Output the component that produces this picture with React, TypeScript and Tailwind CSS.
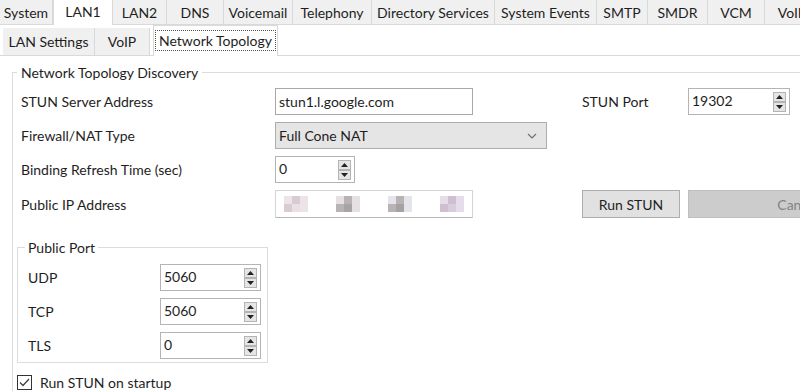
import React from 'react';

const topTabs: { label: string; w: string }[] = [
  { label: 'System', w: 'w-[53px]' },
  { label: 'LAN1', w: 'w-[60px]' },
  { label: 'LAN2', w: 'w-[54px]' },
  { label: 'DNS', w: 'w-[57px]' },
  { label: 'Voicemail', w: 'w-[69px]' },
  { label: 'Telephony', w: 'w-[79px]' },
  { label: 'Directory Services', w: 'w-[123px]' },
  { label: 'System Events', w: 'w-[102px]' },
  { label: 'SMTP', w: 'w-[51px]' },
  { label: 'SMDR', w: 'w-[60px]' },
  { label: 'VCM', w: 'w-[57px]' },
  { label: 'VoIP', w: 'w-[55px]' },
];

function Arrow({ up }: { up?: boolean }) {
  return (
    <div className="w-[13px] h-[10px] bg-[#e5e5e5] border border-[#b4b4b4] flex items-center justify-center">
      <svg width="7" height="4" viewBox="0 0 7 4">
        {up ? <path d="M0 4 L3.5 0 L7 4 Z" fill="#222" /> : <path d="M0 0 L3.5 4 L7 0 Z" fill="#222" />}
      </svg>
    </div>
  );
}

function SpinBox({ value, w }: { value: string; w: string }) {
  return (
    <div className={`h-[27px] ${w} border border-[#b4b4b4] bg-white flex items-center justify-between pl-[3px] pr-[3px]`}>
      <span className="-mt-[2px]">{value}</span>
      <div className="flex flex-col">
        <Arrow up />
        <Arrow />
      </div>
    </div>
  );
}

function Blob({ c1, c2, c3 }: { c1: string; c2: string; c3: string }) {
  return (
    <div className="flex h-[16px]">
      <div className="flex flex-col w-[8px]">
        <div className={`h-[8px] ${c1}`} />
        <div className={`h-[8px] ${c2}`} />
      </div>
      <div className="flex flex-col w-[8px]">
        <div className={`h-[8px] ${c2}`} />
        <div className={`h-[8px] ${c3}`} />
      </div>
      <div className="flex flex-col w-[8px]">
        <div className={`h-[8px] ${c1}`} />
        <div className={`h-[8px] ${c1}`} />
      </div>
    </div>
  );
}

export default function App() {
  return (
    <div className="w-[800px] h-[391px] overflow-hidden bg-white text-[14px] leading-[17px] text-[#1e1e1e] font-['Lato',sans-serif]">
      {/* top tabs */}
      <div className="flex h-[25px]">
        {topTabs.map(t =>
          t.label === 'LAN1' ? (
            <div key={t.label} className={`${t.w} shrink-0 h-[25px] bg-white border-x border-[#d9d9d9] flex items-start justify-center pt-[3px]`}>
              {t.label}
            </div>
          ) : (
            <div key={t.label} className={`${t.w} shrink-0 h-[25px] bg-[#f0f0f0] border-r border-b border-[#d9d9d9] flex items-center justify-center pt-[1px]`}>
              {t.label}
            </div>
          )
        )}
      </div>

      {/* sub tabs */}
      <div className="flex items-end h-[31px] border-b border-[#d9d9d9] pl-[3px]">
        <div className="w-[92px] h-[27px] bg-[#f0f0f0] border-r border-[#d9d9d9] flex items-center justify-center">LAN Settings</div>
        <div className="w-[55px] h-[27px] bg-[#f0f0f0] border-r border-[#d9d9d9] flex items-center justify-center">VoIP</div>
        <div className="ml-[3px] w-[125px] h-[31px] -mb-px bg-white border-x border-t border-[#d9d9d9] flex items-center justify-center">
          <span className="border border-dotted border-[#555] px-[3px] py-[1px] -mt-[2px]">Network Topology</span>
        </div>
      </div>

      {/* content */}
      <fieldset className="ml-[12px] mt-[8px] w-[900px] border border-[#dcdcdc] pl-[4px] pt-[7px] pb-[40px]">
        <legend className="px-[4px]">Network Topology Discovery</legend>

        <div className="grid grid-cols-[254px_307px_106px_220px] grid-rows-[27px_27px_27px_28px] gap-y-[7px] pl-[4px]">
          <div className="flex items-center">STUN Server Address</div>
          <div>
            <div className="w-[198px] h-[27px] border border-[#a8a8a8] bg-white flex items-center pl-[3px]">stun1.l.google.com</div>
          </div>
          <div className="flex items-center">STUN Port</div>
          <div>
            <SpinBox value="19302" w="w-[102px]" />
          </div>

          <div className="flex items-center">Firewall/NAT Type</div>
          <div className="col-span-3">
            <div className="w-[272px] h-[27px] border border-[#adadad] bg-[#e5e5e5] flex items-center justify-between pl-[3px] pr-[9px]">
              <span>Full Cone NAT</span>
              <svg width="10" height="6" viewBox="0 0 10 6">
                <path d="M1 1 L5 5 L9 1" stroke="#707070" strokeWidth="1.2" fill="none" />
              </svg>
            </div>
          </div>

          <div className="flex items-center">Binding Refresh Time (sec)</div>
          <div className="col-span-3">
            <SpinBox value="0" w="w-[80px]" />
          </div>

          <div className="flex items-center">Public IP Address</div>
          <div>
            <div className="w-[198px] h-[28px] border border-[#d4d4d4] border-b-[#b8b8b8] bg-white flex items-center gap-[28px] pl-[8px]">
              <Blob c1="bg-[#ece4e8]" c2="bg-[#d8ccd2]" c3="bg-[#e8e0e4]" />
              <Blob c1="bg-[#e6e0e3]" c2="bg-[#b9b3b6]" c3="bg-[#a8a4a6]" />
              <Blob c1="bg-[#e4e4ea]" c2="bg-[#b8b4b6]" c3="bg-[#a6a2a4]" />
              <Blob c1="bg-[#e6dcea]" c2="bg-[#cfc0cf]" c3="bg-[#d8cce0]" />
            </div>
          </div>
          <div>
            <div className="w-[98px] h-[28px] border border-[#adadad] bg-[#e1e1e1] flex items-center justify-center">Run STUN</div>
          </div>
          <div>
            <div className="w-[220px] h-[28px] border border-[#bfbfbf] bg-[#cccccc] text-[#838383] flex items-center justify-center">Cancel</div>
          </div>
        </div>

        <fieldset className="mt-[21px] w-[251px] border border-[#dcdcdc] pl-[10px] pt-[8px] pb-[3px]">
          <legend className="px-[3px] -ml-[3px]">Public Port</legend>
          <div className="flex flex-col gap-[7px]">
            {[
              ['UDP', '5060'],
              ['TCP', '5060'],
              ['TLS', '0'],
            ].map(([l, v]) => (
              <div key={l} className="flex items-center">
                <div className="w-[132px]">{l}</div>
                <SpinBox value={v} w="w-[101px]" />
              </div>
            ))}
          </div>
        </fieldset>

        <div className="mt-[11px] flex items-center gap-[8px]">
          <div className="w-[15px] h-[15px] border border-[#333] bg-white flex items-center justify-center">
            <svg width="11" height="9" viewBox="0 0 11 9">
              <path d="M1 4.5 L4 7.5 L10 1" stroke="#444" strokeWidth="1.3" fill="none" />
            </svg>
          </div>
          <span>Run STUN on startup</span>
        </div>
      </fieldset>
    </div>
  );
}
